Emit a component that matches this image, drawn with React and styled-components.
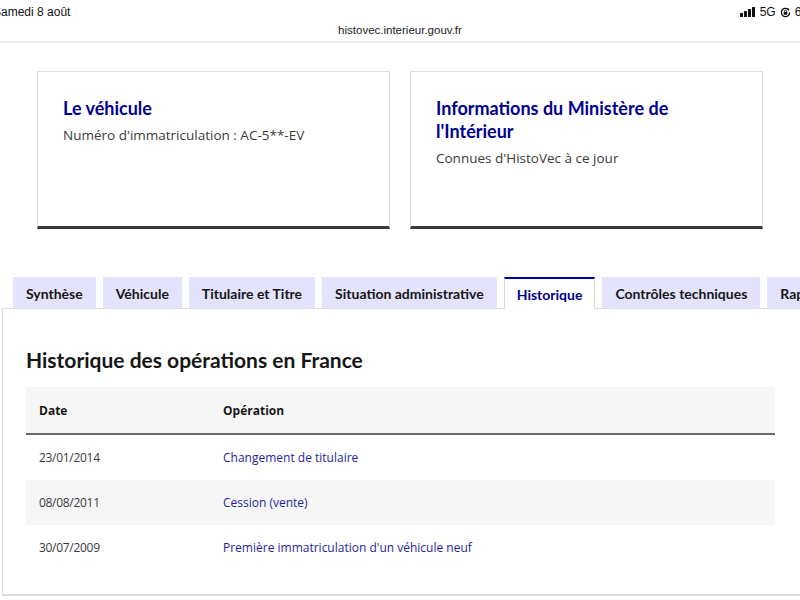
import styled, { createGlobalStyle } from "styled-components";

const Global = createGlobalStyle`
  html, body {
    margin: 0;
    padding: 0;
    background: #fff;
    overflow: hidden;
  }
  body {
    font-family: "Open Sans", "Noto Sans", Arial, sans-serif;
    color: #161616;
  }
`;

const Page = styled.div`
  width: 800px;
  height: 600px;
  overflow: hidden;
  display: flex;
  flex-direction: column;
`;

const StatusBar = styled.div`
  height: 24px;
  display: flex;
  align-items: center;
  justify-content: space-between;
  font-family: "Liberation Sans", Arial, sans-serif;
  font-size: 12px;
  color: #111;
  white-space: nowrap;
`;

const Clock = styled.span`
  margin-left: -7px;
`;

const Indicators = styled.span`
  display: flex;
  align-items: center;
  gap: 4px;
  margin-right: -22px;
`;

const UrlBar = styled.div`
  height: 17px;
  display: flex;
  justify-content: center;
  align-items: flex-start;
  font-family: "Liberation Sans", Arial, sans-serif;
  font-size: 11.5px;
  color: #222;
  border-bottom: 2px solid #efefef;
`;

const Cards = styled.div`
  display: grid;
  grid-template-columns: 353px 353px;
  gap: 20px;
  padding: 28px 37px 0;
`;

const Card = styled.div`
  border: 1px solid #dddddd;
  border-bottom: 3px solid #3a3a3a;
  padding: 25px 25px 0;
  box-sizing: border-box;
  height: 158px;
`;

const CardTitle = styled.h3`
  margin: 0 0 5px;
  font-family: Lato, "Open Sans", sans-serif;
  font-size: 18px;
  font-weight: 700;
  line-height: 23px;
  color: #000091;
`;

const CardText = styled.p`
  margin: 0;
  font-size: 13.5px;
  line-height: 20px;
  color: #3a3a3a;
`;

const Tabs = styled.div`
  display: flex;
  gap: 7px;
  margin-top: 48px;
  padding-left: 13px;
  white-space: nowrap;
  position: relative;
  z-index: 1;
`;

const Tab = styled.div`
  flex: none;
  box-sizing: border-box;
  padding: 0 12px;
  display: flex;
  align-items: center;
  font-family: Lato, "Open Sans", sans-serif;
  font-size: 14px;
  font-weight: 700;
  background: ${(p) => (p.$active ? "#fff" : "#e3e3fd")};
  color: ${(p) => (p.$active ? "#000091" : "#161616")};
  border-top: 2px solid ${(p) => (p.$active ? "#000091" : "transparent")};
  border-left: 1px solid ${(p) => (p.$active ? "#dddddd" : "transparent")};
  border-right: 1px solid ${(p) => (p.$active ? "#dddddd" : "transparent")};
  margin-bottom: ${(p) => (p.$active ? "-1px" : "0")};
  height: ${(p) => (p.$active ? "32px" : "31px")};
`;

const Panel = styled.div`
  margin: 0 -4px 0 2px;
  border: 1px solid #dddddd;
  border-bottom: 2px solid #dcdcdc;
  height: 288px;
  box-sizing: border-box;
  padding: 37px 24px 0 23px;
`;

const PanelTitle = styled.h2`
  margin: 0 0 13px;
  font-family: Lato, "Open Sans", sans-serif;
  font-size: 21px;
  font-weight: 700;
  line-height: 28px;
  color: #161616;
`;

const Table = styled.table`
  width: 749px;
  border-collapse: collapse;
  table-layout: fixed;
  font-size: 12px;
`;

const HeadCell = styled.th`
  text-align: left;
  font-weight: 700;
  height: 46px;
  padding: 0 0 0 13px;
  background: #f6f6f6;
  border-bottom: 2px solid #6a6a6a;
  width: ${(p) => p.$w || "auto"};
`;

const Row = styled.tr`
  background: ${(p) => (p.$striped ? "#f6f6f6" : "#fff")};
`;

const Cell = styled.td`
  height: 45px;
  padding: 0 0 0 13px;
  color: ${(p) => (p.$link ? "#1f1f9b" : "#3a3a3a")};
  letter-spacing: ${(p) => (p.$link ? "0" : "-0.3px")};
`;

function Signal() {
  return (
    <svg width="16" height="10" viewBox="0 0 16 10">
      <rect x="0" y="6" width="3" height="4" rx="0.5" fill="#111" />
      <rect x="4" y="4" width="3" height="6" rx="0.5" fill="#111" />
      <rect x="8" y="2" width="3" height="8" rx="0.5" fill="#111" />
      <rect x="12" y="0" width="3" height="10" rx="0.5" fill="#111" />
    </svg>
  );
}

// orientation lock glyph: a ring with an arrow tip and a small padlock
function RotationLock() {
  return (
    <svg width="11" height="11" viewBox="0 0 12 12">
      <path
        d="M10.5 6a4.5 4.5 0 1 1-1.6-3.45"
        fill="none"
        stroke="#111"
        strokeWidth="1.4"
      />
      <path d="M8 1.2l2.4 1.1-1.6 2z" fill="#111" />
      <rect x="4" y="5.4" width="4" height="3" rx="0.4" fill="#111" />
      <path d="M4.8 5.5V4.6a1.2 1.2 0 0 1 2.4 0v0.9" fill="none" stroke="#111" strokeWidth="0.9" />
    </svg>
  );
}

const rows = [
  ["23/01/2014", "Changement de titulaire"],
  ["08/08/2011", "Cession (vente)"],
  ["30/07/2009", "Première immatriculation d'un véhicule neuf"],
];

const tabs = [
  "Synthèse",
  "Véhicule",
  "Titulaire et Titre",
  "Situation administrative",
  "Historique",
  "Contrôles techniques",
  "Rapport",
];

export default function App() {
  return (
    <Page>
      <Global />
      <StatusBar>
        <Clock>Samedi 8 août</Clock>
        <Indicators>
          <Signal />
          <span>5G</span>
          <RotationLock />
          <span>60 %</span>
        </Indicators>
      </StatusBar>
      <UrlBar>histovec.interieur.gouv.fr</UrlBar>

      <Cards>
        <Card>
          <CardTitle>Le véhicule</CardTitle>
          <CardText>Numéro d'immatriculation : AC-5**-EV</CardText>
        </Card>
        <Card>
          <CardTitle>Informations du Ministère de l'Intérieur</CardTitle>
          <CardText>Connues d'HistoVec à ce jour</CardText>
        </Card>
      </Cards>

      <Tabs>
        {tabs.map((t) => (
          <Tab key={t} $active={t === "Historique"}>
            {t}
          </Tab>
        ))}
      </Tabs>
      <Panel>
        <PanelTitle>Historique des opérations en France</PanelTitle>
        <Table>
          <thead>
            <tr>
              <HeadCell $w="171px">Date</HeadCell>
              <HeadCell>Opération</HeadCell>
            </tr>
          </thead>
          <tbody>
            {rows.map(([date, op], i) => (
              <Row key={date} $striped={i === 1}>
                <Cell>{date}</Cell>
                <Cell $link>{op}</Cell>
              </Row>
            ))}
          </tbody>
        </Table>
      </Panel>
    </Page>
  );
}
